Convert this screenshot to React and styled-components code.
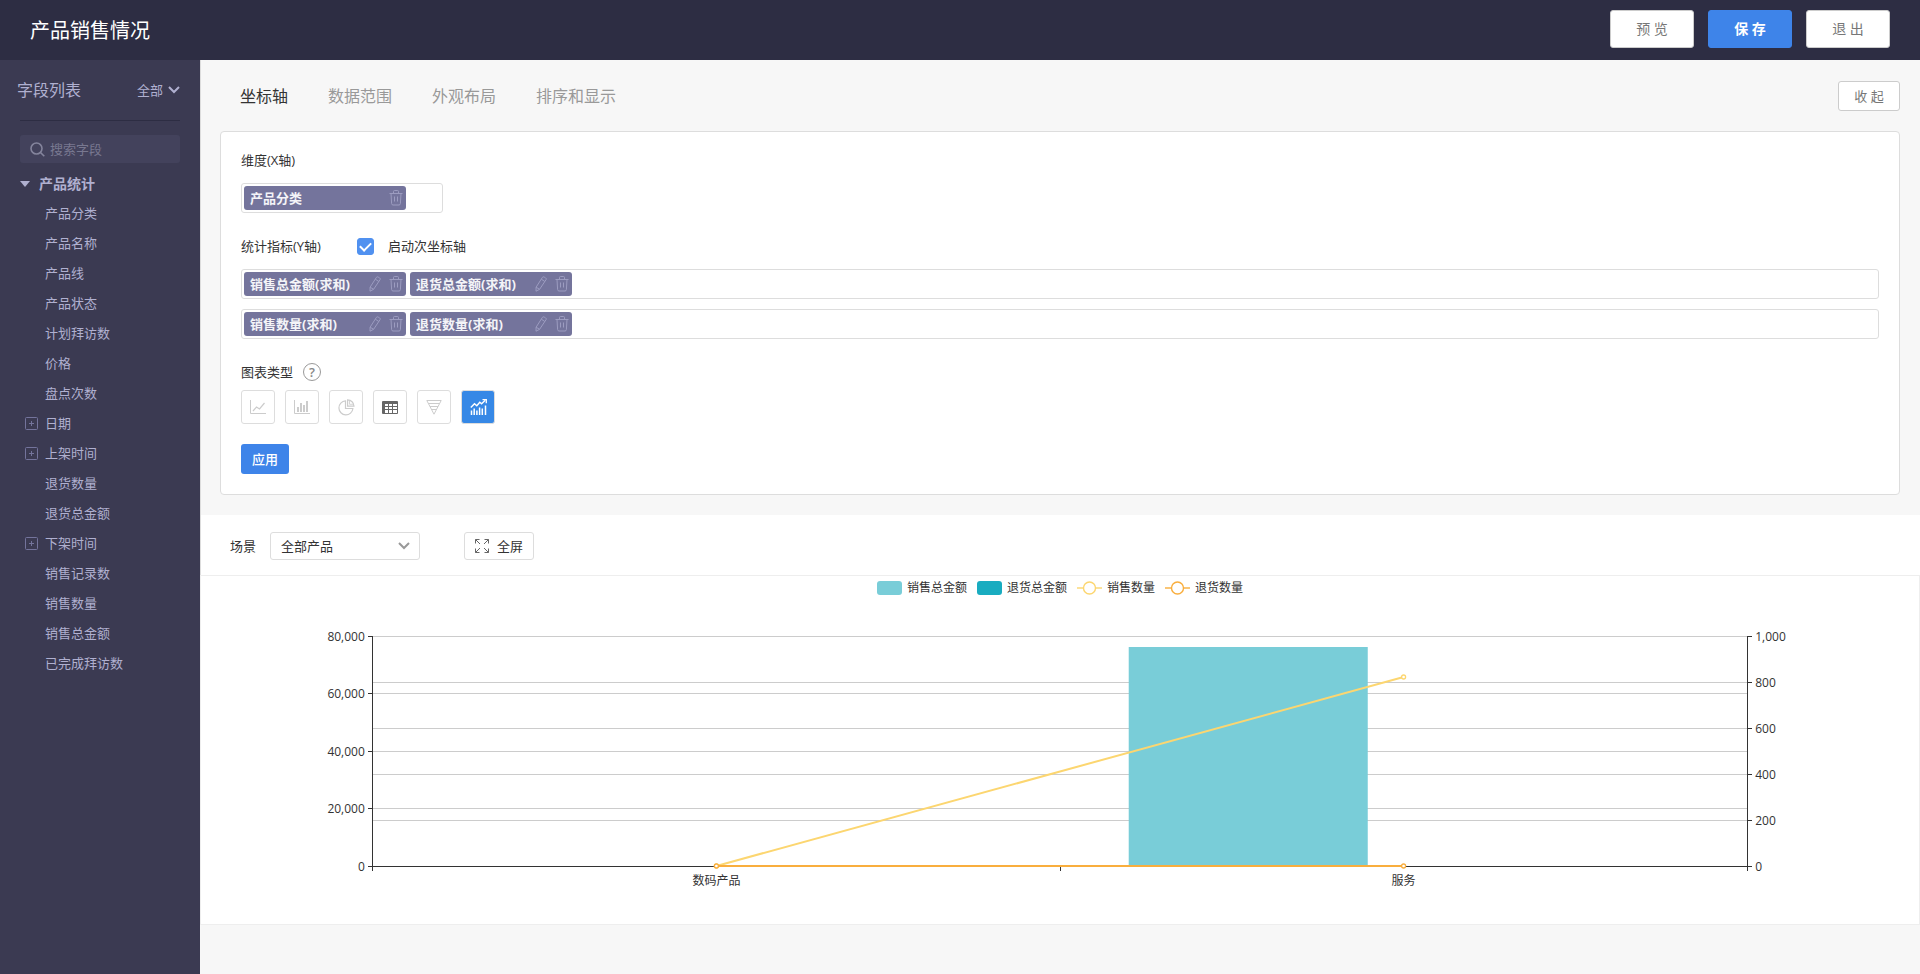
import { useState } from "react";
import styled, { createGlobalStyle } from "styled-components";

const GlobalStyle = createGlobalStyle`
    * {
        box-sizing: border-box;
    }

    body {
        margin: 0;
        background: #f7f7f7;
    }

    body, button, input, select {
        font-family: "Open Sans", "Noto Sans CJK SC", sans-serif;
        font-size: 13px;
        line-height: 20px;
        color: #333;
    }

    button {
        cursor: pointer;
    }
`;

const Page = styled.div`
    display: flex;
    flex-direction: column;
    min-height: 100vh;
`;

const Header = styled.header`
    display: flex;
    align-items: flex-start;
    justify-content: space-between;
    height: 60px;
    padding: 10px 30px;
    background: #2d2d43;
`;

const Title = styled.h1`
    margin: 0;
    font-size: 20px;
    font-weight: 400;
    line-height: 42px;
    color: #fff;
`;

const Actions = styled.div`
    display: flex;
    gap: 14px;
`;

const HeaderButton = styled.button`
    width: 84px;
    height: 38px;
    padding: 0;
    border: 1px solid ${(p) => (p.$primary ? "#3e84e9" : "#ccc")};
    border-radius: 3px;
    background: ${(p) => (p.$primary ? "#3e84e9" : "#fff")};
    color: ${(p) => (p.$primary ? "#fff" : "#777")};
    font-size: 14px;
    font-weight: ${(p) => (p.$primary ? 700 : 400)};
`;

const Body = styled.div`
    display: flex;
    flex: 1;
`;

/* Sidebar */

const Sidebar = styled.aside`
    flex: 0 0 200px;
    min-width: 0;
    padding: 0 20px;
    background: #3b3a52;
    color: #b0b0d0;
`;

const SidebarHead = styled.div`
    display: flex;
    align-items: center;
    justify-content: space-between;
    height: 60px;
    margin-left: -3px;
`;

const SidebarTitle = styled.h2`
    margin: 0;
    font-size: 16px;
    font-weight: 400;
`;

const Divider = styled.hr`
    height: 1px;
    margin: 0 0 14px;
    border: 0;
    background: #2d2d43;
`;

const SelectBox = styled.span`
    position: relative;
    display: inline-flex;
    color: ${(p) => (p.$plain ? "#b0b0d0" : "#999")};

    svg {
        position: absolute;
        top: 50%;
        right: ${(p) => (p.$plain ? "0" : "10px")};
        margin-top: -5px;
        pointer-events: none;
    }
`;

const PlainSelect = styled.select`
    appearance: none;
    padding: 0 16px 0 0;
    border: 0;
    background: transparent;
    color: #b0b0d0;
`;

const SceneSelect = styled.select`
    appearance: none;
    width: 150px;
    height: 28px;
    padding: 0 30px 0 10px;
    border: 1px solid #ddd;
    border-radius: 3px;
    background: #fff;
`;

const SearchBox = styled.label`
    display: flex;
    align-items: center;
    gap: 5px;
    height: 28px;
    padding: 0 10px;
    border-radius: 3px;
    background: #43425c;
    color: #84849c;
`;

const SearchInput = styled.input`
    flex: 1;
    width: 100%;
    min-width: 0;
    padding: 0;
    border: 0;
    outline: 0;
    background: transparent;
    color: #b0b0d0;

    &::placeholder {
        color: #787890;
    }
`;

const GroupButton = styled.button`
    display: flex;
    align-items: center;
    gap: 9px;
    height: 28px;
    margin-top: 7px;
    padding: 0;
    border: 0;
    background: transparent;
    color: #b0b0d0;
    font-size: 14px;
    font-weight: 700;
`;

const FieldList = styled.ul`
    margin: 0;
    padding: 0 0 0 5px;
    list-style: none;
`;

const Field = styled.li`
    display: flex;
    align-items: center;
    height: 30px;
    padding-left: ${(p) => (p.$expandable ? "0" : "20px")};
`;

const ExpandButton = styled.button`
    display: flex;
    width: 13px;
    height: 13px;
    margin-right: 7px;
    padding: 0;
    border: 0;
    background: transparent;
    color: #74749c;
`;

/* Settings */

const Main = styled.main`
    flex: 1;
    min-width: 0;
    background: #f7f7f7;
`;

const Settings = styled.section`
    padding: 0 20px 20px 19px;
    border-left: 1px solid #ddd;
`;

const TabBar = styled.div`
    display: flex;
    align-items: center;
    justify-content: space-between;
    height: 71px;
`;

const Tabs = styled.nav`
    display: flex;
    gap: 40px;
    padding-left: 20px;
`;

const Tab = styled.button`
    padding: 0;
    border: 0;
    background: transparent;
    font-size: 16px;
    color: ${(p) => (p.$active ? "#333" : "#999")};
`;

const CollapseButton = styled.button`
    width: 62px;
    height: 30px;
    padding: 0;
    border: 1px solid #ccc;
    border-radius: 3px;
    background: #fff;
    color: #777;
`;

const Panel = styled.div`
    padding: 18px 20px 20px;
    border: 1px solid #ddd;
    border-radius: 4px;
    background: #fff;
`;

const Group = styled.div`
    margin-bottom: 23px;
`;

const LabelRow = styled.div`
    display: flex;
    align-items: center;
    height: 20px;
    margin-bottom: ${(p) => (p.$tight ? "8px" : "13px")};
`;

const CheckLabel = styled.label`
    display: flex;
    align-items: center;
    gap: 14px;
    margin-left: 36px;
`;

const Checkbox = styled.input`
    appearance: none;
    display: grid;
    place-items: center;
    width: 17px;
    height: 17px;
    margin: 0;
    border: 1px solid #ccc;
    border-radius: 3px;

    &:checked {
        border-color: #5091f0;
        background: #5091f0;
    }

    &:checked::after {
        content: "";
        width: 9px;
        height: 5px;
        margin-bottom: 2px;
        border: solid #fff;
        border-width: 0 0 2px 2px;
        transform: rotate(-45deg);
    }
`;

const DropBox = styled.div`
    display: flex;
    align-items: center;
    gap: 4px;
    width: ${(p) => (p.$short ? "202px" : "auto")};
    height: 30px;
    padding: 2px;
    border: 1px solid #ddd;
    border-radius: 3px;

    & + & {
        margin-top: 10px;
    }
`;

const Tag = styled.span`
    display: flex;
    align-items: center;
    gap: 4px;
    width: 162px;
    height: 24px;
    padding: 0 1px 0 6px;
    border-radius: 3px;
    background: #74749c;
    color: #f4f4f8;
    font-weight: 700;
`;

const TagName = styled.span`
    flex: 1;
    white-space: nowrap;
`;

const IconButton = styled.button`
    display: flex;
    padding: 2px;
    border: 0;
    background: transparent;
    color: #9c9cc0;
`;

const HelpButton = styled.button`
    width: 18px;
    height: 18px;
    margin-left: 10px;
    padding: 0;
    border: 1px solid #999;
    border-radius: 50%;
    background: #fff;
    color: #888;
    line-height: 16px;
    font-weight: 600;
`;

const ChartTypes = styled.div`
    display: flex;
    gap: 10px;
    margin-bottom: 20px;
`;

const ChartType = styled.button`
    display: grid;
    place-items: center;
    width: 34px;
    height: 34px;
    padding: 0;
    border: 1px solid #ddd;
    border-radius: 3px;
    background: ${(p) => (p.$active ? "#3688e6" : "#fff")};
    color: ${(p) => (p.$active ? "#fff" : p.$dark ? "#666" : "#ccc")};
`;

const ApplyButton = styled.button`
    display: block;
    width: 48px;
    height: 30px;
    padding: 0;
    border: 0;
    border-radius: 3px;
    background: #3e84e9;
    color: #fff;
    font-weight: 500;
`;

/* Result */

const Toolbar = styled.div`
    display: flex;
    align-items: flex-start;
    height: 60px;
    padding: 17px 29px 0;
    border-left: 1px solid #ddd;
    background: #fff;
`;

const SceneLabel = styled.label`
    margin-right: 14px;
    line-height: 28px;
`;

const FullscreenButton = styled.button`
    display: flex;
    align-items: center;
    justify-content: center;
    gap: 8px;
    width: 70px;
    height: 28px;
    margin-left: 44px;
    padding: 0;
    border: 1px solid #ddd;
    border-radius: 3px;
    background: #fff;
`;

const ChartCard = styled.section`
    border: 1px solid #eee;
    background: #fff;
`;

const Legend = styled.ul`
    display: flex;
    justify-content: center;
    gap: 10px;
    margin: 0;
    padding: 2px 0;
    list-style: none;
    font-size: 12px;
`;

const LegendItem = styled.li`
    display: flex;
    align-items: center;
    gap: 5px;
`;

const Swatch = styled.span`
    width: 25px;
    height: 14px;
    border-radius: 3px;
    background: ${(p) => p.$color};
`;

const ChartSvg = styled.svg`
    display: block;
    width: 100%;
    height: 324px;
    font-size: 12px;
    fill: #333;

    .axis {
        stroke: #333;
        shape-rendering: crispEdges;
    }

    .grid {
        stroke: #ccc;
        shape-rendering: crispEdges;
    }
`;

const fields = [
    { name: "产品分类" },
    { name: "产品名称" },
    { name: "产品线" },
    { name: "产品状态" },
    { name: "计划拜访数" },
    { name: "价格" },
    { name: "盘点次数" },
    { name: "日期", expandable: true },
    { name: "上架时间", expandable: true },
    { name: "退货数量" },
    { name: "退货总金额" },
    { name: "下架时间", expandable: true },
    { name: "销售记录数" },
    { name: "销售数量" },
    { name: "销售总金额" },
    { name: "已完成拜访数" },
];

const tabs = ["坐标轴", "数据范围", "外观布局", "排序和显示"];

const metrics = [
    ["销售总金额(求和)", "退货总金额(求和)"],
    ["销售数量(求和)", "退货数量(求和)"],
];

const categories = ["数码产品", "服务"];

const series = [
    { name: "销售总金额", type: "bar", color: "#79cdd8", data: [0, 76200] },
    { name: "退货总金额", type: "bar", color: "#19acc0", data: [0, 0] },
    { name: "销售数量", type: "line", color: "#fcd670", data: [0, 820] },
    { name: "退货数量", type: "line", color: "#f9ae3d", data: [0, 0] },
];

const Chevron = () => (
    <svg width="12" height="10" viewBox="0 0 12 10" fill="none" stroke="currentColor" strokeWidth="2">
        <path d="M1 2l5 5 5-5" />
    </svg>
);

const SearchIcon = () => (
    <svg width="15" height="15" viewBox="0 0 15 15" fill="none" stroke="currentColor" strokeWidth="1.6">
        <circle cx="6.5" cy="6.5" r="5.5" />
        <path d="M10.5 10.5l3.8 3.8" />
    </svg>
);

const TrashIcon = () => (
    <svg width="14" height="16" viewBox="0 0 14 16" fill="none" stroke="currentColor">
        <path d="M0.5 3.5h13M4.5 3.5v-2q0-1 1-1h3q1 0 1 1v2M2 3.5l0.6 10q0.1 1.5 1.4 1.5h6q1.3 0 1.4-1.5l0.6-10M5.5 6.5v5M8.5 6.5v5" />
    </svg>
);

const PencilIcon = () => (
    <svg width="12" height="16" viewBox="0 0 12 16" fill="none" stroke="currentColor">
        <path d="M7.4 1.4q0.7-1 1.7-0.4l1.6 1q1 0.6 0.4 1.6L4.6 13.3 1 15.2l0.1-4zM6.3 3.2l3.6 2.3M1.1 11.2l3.5 2.1" />
    </svg>
);

const PlusBoxIcon = () => (
    <svg width="13" height="13" viewBox="0 0 13 13" fill="none" stroke="currentColor">
        <rect x="0.5" y="0.5" width="12" height="12" rx="1" />
        <path d="M4 6.5h5M6.5 4v5" />
    </svg>
);

const FullscreenIcon = () => (
    <svg width="14" height="14" viewBox="0 0 14 14" fill="none" stroke="#666">
        <path d="M0.5 4.5v-4h4M0.5 0.5l4.5 4.5M9.5 0.5h4v4M13.5 0.5L9 5M0.5 9.5v4h4M0.5 13.5L5 9M13.5 9.5v4h-4M13.5 13.5L9 9" />
    </svg>
);

const LineIcon = () => (
    <svg width="16" height="15" viewBox="0 0 16 15" fill="none" stroke="currentColor">
        <path d="M0.5 0v13.5H16" />
        <path d="M3 11l3.5-4 3 2L14.5 3" strokeWidth="1.2" />
    </svg>
);

const BarIcon = () => (
    <svg width="16" height="15" viewBox="0 0 16 15" fill="none" stroke="currentColor">
        <path d="M0.5 0v13.5H16" />
        <path d="M4 12V7M7 12V3M10 12V5M13 12V1" strokeWidth="2" />
    </svg>
);

const PieIcon = () => (
    <svg width="17" height="17" viewBox="0 0 17 17" fill="none" stroke="currentColor" strokeWidth="1.2">
        <path d="M7.5 1.9a7 7 0 1 0 7.4 7.6H7.5z" />
        <path d="M9.6 0.8v6.4h6.4a6.6 6.6 0 0 0-6.4-6.4z" />
        <path d="M11.5 1.5v3.8h3.9" strokeWidth="0.8" />
    </svg>
);

const TableIcon = () => (
    <svg width="16" height="13" viewBox="0 0 16 13">
        <rect width="16" height="13" rx="1" fill="currentColor" />
        <path d="M3 3h3v2H3zM7 3h3v2H7zM11 3h4v2h-4zM3 6h3v2H3zM7 6h3v2H7zM11 6h4v2h-4zM3 9h3v3H3zM7 9h3v3H7zM11 9h4v3h-4z" fill="#fff" />
    </svg>
);

const FunnelIcon = () => (
    <svg width="16" height="15" viewBox="0 0 16 15" fill="none" stroke="currentColor">
        <path d="M0.8 0.5h14.4L8 14.2zM2.3 3.5h11.4M4 6.5h8M5.5 9.5h5" />
    </svg>
);

const ComboIcon = () => (
    <svg width="17" height="16" viewBox="0 0 17 16" fill="none" stroke="currentColor">
        <path d="M0.8 8.6L4.5 4.8l2.3 2 3-3.6 1.8 1.5 3.6-3.4" strokeWidth="1.4" />
        <path d="M12.5 0.7h3.8v3.6" strokeWidth="1.3" />
        <path d="M1.5 16v-4.5M4.2 16V9.5M6.9 16v-4.5M9.6 16V8.5M12.3 16V9.5M15.5 16V6.5" strokeWidth="1.5" />
    </svg>
);

const chartTypes = [
    { name: "折线图", Icon: LineIcon },
    { name: "柱状图", Icon: BarIcon },
    { name: "饼图", Icon: PieIcon },
    { name: "表格", Icon: TableIcon, dark: true },
    { name: "漏斗图", Icon: FunnelIcon },
    { name: "双轴图", Icon: ComboIcon },
];

const LegendLine = ({ color }) => (
    <svg width="25" height="14" viewBox="0 0 25 14" fill="#fff" stroke={color}>
        <path d="M0 7h25" strokeWidth="2" opacity="0.7" />
        <circle cx="12.5" cy="7" r="6" strokeWidth="1.4" />
    </svg>
);

const GRID_TOP = 36;
const GRID_HEIGHT = 230;
const LEFT_MAX = 80000;
const RIGHT_MAX = 1000;

const toY = (value, max) => GRID_HEIGHT - Math.round((value / max) * GRID_HEIGHT);
const range = (max, step) => Array.from({ length: max / step + 1 }, (_, i) => i * step);
const pct = (n) => `${n}%`;

function ComboChart() {
    const band = 100 / categories.length;
    const barWidth = (band * 0.8) / 2.3;
    const bars = series.filter((s) => s.type === "bar");
    const lines = series.filter((s) => s.type === "line");
    const leftTicks = range(LEFT_MAX, 20000);
    const rightTicks = range(RIGHT_MAX, 200);

    return (
        <ChartSvg role="img" aria-label="产品销售情况">
            <svg x="10%" y={GRID_TOP} width="80%" height={GRID_HEIGHT} overflow="visible">
                {leftTicks.map((t) => (
                    <line key={t} className="grid" x1="0" x2="100%" y1={toY(t, LEFT_MAX) + 0.5} y2={toY(t, LEFT_MAX) + 0.5} />
                ))}
                {rightTicks.map((t) => (
                    <line key={t} className="grid" x1="0" x2="100%" y1={toY(t, RIGHT_MAX) + 0.5} y2={toY(t, RIGHT_MAX) + 0.5} />
                ))}

                {bars.map((s, n) =>
                    s.data.map((v, i) => (
                        <rect
                            key={s.name + i}
                            x={pct(band * i + band * 0.1 + n * barWidth * 1.3)}
                            y={toY(v, LEFT_MAX)}
                            width={pct(barWidth)}
                            height={GRID_HEIGHT - toY(v, LEFT_MAX)}
                            fill={s.color}
                        />
                    ))
                )}

                {/* Axes */}
                <line className="axis" x1="0" x2="100%" y1={GRID_HEIGHT + 0.5} y2={GRID_HEIGHT + 0.5} />
                <line className="axis" x1="0" x2="0" y1="0" y2={GRID_HEIGHT + 5} />
                <line className="axis" x1="50%" x2="50%" y1={GRID_HEIGHT} y2={GRID_HEIGHT + 5} />
                <line className="axis" x1="100%" x2="100%" y1="0" y2={GRID_HEIGHT + 5} />
                {leftTicks.map((t) => (
                    <g key={t}>
                        <line className="axis" x1="-5" x2="0" y1={toY(t, LEFT_MAX) + 0.5} y2={toY(t, LEFT_MAX) + 0.5} />
                        <text x="-8" y={toY(t, LEFT_MAX) + 5} textAnchor="end">{t.toLocaleString("en-US")}</text>
                    </g>
                ))}
                {categories.map((c, i) => (
                    <text key={c} x={pct(band * (i + 0.5))} y={GRID_HEIGHT + 19} textAnchor="middle">{c}</text>
                ))}
                <svg x="100%" overflow="visible">
                    {rightTicks.map((t) => (
                        <g key={t}>
                            <line className="axis" x1="0" x2="5" y1={toY(t, RIGHT_MAX) + 0.5} y2={toY(t, RIGHT_MAX) + 0.5} />
                            <text x="8" y={toY(t, RIGHT_MAX) + 5}>{t.toLocaleString("en-US")}</text>
                        </g>
                    ))}
                </svg>

                {/* Lines */}
                {lines.map((s) => (
                    <g key={s.name} stroke={s.color} fill="#fff">
                        {s.data.slice(1).map((v, i) => (
                            <line
                                key={i}
                                x1={pct(band * (i + 0.5))}
                                y1={toY(s.data[i], RIGHT_MAX)}
                                x2={pct(band * (i + 1.5))}
                                y2={toY(v, RIGHT_MAX)}
                                strokeWidth="2"
                            />
                        ))}
                        {s.data.map((v, i) => (
                            <circle key={i} cx={pct(band * (i + 0.5))} cy={toY(v, RIGHT_MAX)} r="2" strokeWidth="1.3" />
                        ))}
                    </g>
                ))}
            </svg>
        </ChartSvg>
    );
}

export default function App() {
    const [activeTab, setActiveTab] = useState(tabs[0]);
    const [chartType, setChartType] = useState("双轴图");
    const [secondAxis, setSecondAxis] = useState(true);

    return (
        <Page>
            <GlobalStyle />

            <Header>
                <Title>产品销售情况</Title>
                <Actions>
                    <HeaderButton>预 览</HeaderButton>
                    <HeaderButton $primary>保 存</HeaderButton>
                    <HeaderButton>退 出</HeaderButton>
                </Actions>
            </Header>

            <Body>
                <Sidebar>
                    <SidebarHead>
                        <SidebarTitle>字段列表</SidebarTitle>
                        <SelectBox $plain>
                            <PlainSelect aria-label="字段类型">
                                <option>全部</option>
                            </PlainSelect>
                            <Chevron />
                        </SelectBox>
                    </SidebarHead>
                    <Divider />
                    <SearchBox>
                        <SearchIcon />
                        <SearchInput type="text" placeholder="搜索字段" aria-label="搜索字段" />
                    </SearchBox>
                    <GroupButton>
                        <svg width="10" height="6" viewBox="0 0 10 6" fill="currentColor">
                            <path d="M0 0h10L5 6z" />
                        </svg>
                        产品统计
                    </GroupButton>
                    <FieldList>
                        {fields.map((f) => (
                            <Field key={f.name} $expandable={f.expandable}>
                                {f.expandable && (
                                    <ExpandButton aria-label={`展开${f.name}`}>
                                        <PlusBoxIcon />
                                    </ExpandButton>
                                )}
                                {f.name}
                            </Field>
                        ))}
                    </FieldList>
                </Sidebar>

                <Main>
                    <Settings>
                        <TabBar>
                            <Tabs>
                                {tabs.map((t) => (
                                    <Tab key={t} $active={t === activeTab} onClick={() => setActiveTab(t)}>{t}</Tab>
                                ))}
                            </Tabs>
                            <CollapseButton>收 起</CollapseButton>
                        </TabBar>

                        <Panel>
                            <Group>
                                <LabelRow>维度(X轴)</LabelRow>
                                <DropBox $short>
                                    <Tag>
                                        <TagName>产品分类</TagName>
                                        <IconButton aria-label="删除"><TrashIcon /></IconButton>
                                    </Tag>
                                </DropBox>
                            </Group>

                            <Group>
                                <LabelRow>
                                    统计指标(Y轴)
                                    <CheckLabel>
                                        <Checkbox
                                            type="checkbox"
                                            checked={secondAxis}
                                            onChange={(e) => setSecondAxis(e.target.checked)}
                                        />
                                        启动次坐标轴
                                    </CheckLabel>
                                </LabelRow>
                                {metrics.map((row, i) => (
                                    <DropBox key={i}>
                                        {row.map((m) => (
                                            <Tag key={m}>
                                                <TagName>{m}</TagName>
                                                <IconButton aria-label="编辑"><PencilIcon /></IconButton>
                                                <IconButton aria-label="删除"><TrashIcon /></IconButton>
                                            </Tag>
                                        ))}
                                    </DropBox>
                                ))}
                            </Group>

                            <LabelRow $tight>
                                图表类型
                                <HelpButton aria-label="帮助">?</HelpButton>
                            </LabelRow>
                            <ChartTypes>
                                {chartTypes.map(({ name, Icon, dark }) => (
                                    <ChartType
                                        key={name}
                                        aria-label={name}
                                        $active={name === chartType}
                                        $dark={dark}
                                        onClick={() => setChartType(name)}
                                    >
                                        <Icon />
                                    </ChartType>
                                ))}
                            </ChartTypes>
                            <ApplyButton>应用</ApplyButton>
                        </Panel>
                    </Settings>

                    <Toolbar>
                        <SceneLabel htmlFor="scene">场景</SceneLabel>
                        <SelectBox>
                            <SceneSelect id="scene">
                                <option>全部产品</option>
                            </SceneSelect>
                            <Chevron />
                        </SelectBox>
                        <FullscreenButton>
                            <FullscreenIcon />
                            全屏
                        </FullscreenButton>
                    </Toolbar>

                    <ChartCard>
                        <Legend>
                            {series.map((s) => (
                                <LegendItem key={s.name}>
                                    {s.type === "bar" ? <Swatch $color={s.color} /> : <LegendLine color={s.color} />}
                                    {s.name}
                                </LegendItem>
                            ))}
                        </Legend>
                        <ComboChart />
                    </ChartCard>
                </Main>
            </Body>
        </Page>
    );
}
